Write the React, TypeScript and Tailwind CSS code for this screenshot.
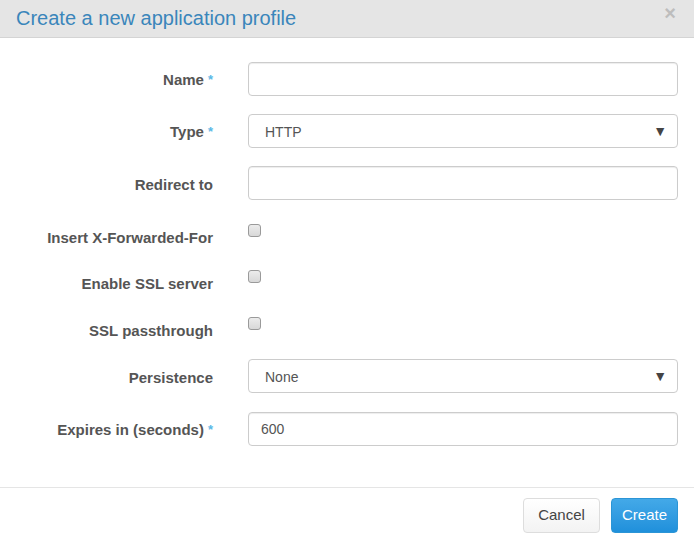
import React from 'react'

const font = { fontFamily: '"Liberation Sans", Arial, sans-serif' }

const Label = ({ text, required }: { text: string; required?: boolean }) => (
  <div className="w-[213px] shrink-0 text-right text-[15px] font-bold leading-5 text-[#555]">
    {text}
    {required && <span className="relative -top-[1px] ml-[4px] text-[13px] text-[#5bb8e6]">*</span>}
  </div>
)

const Input = ({ value }: { value?: string }) => (
  <div className="flex h-[34px] w-[430px] items-center rounded border border-[#ccc] bg-white px-3 pt-[1px] text-[14px] text-[#555] shadow-[inset_0_1px_1px_rgba(0,0,0,0.075)]">
    {value}
  </div>
)

const Select = ({ value }: { value: string }) => (
  <div className="flex h-[34px] w-[430px] items-center justify-between rounded border border-[#ccc] bg-white pl-4 pr-[10px] pt-[2px] text-[14px] text-[#555]">
    <span>{value}</span>
    <span className="-mt-[2px] text-[14px] text-[#444]">▼</span>
  </div>
)

const Checkbox = () => (
  <div className="mt-[6px] h-[13px] w-[13px] rounded-[3px] border border-[#9a9a9a] bg-gradient-to-b from-[#ececec] to-[#d8d8d8]" />
)

const FieldRow = ({ label, required, children, className }: { label: string; required?: boolean; children: React.ReactNode; className?: string }) => (
  <div className={`flex items-center gap-[35px] ${className ?? ''}`}>
    <div className="pt-[3px]">
      <Label text={label} required={required} />
    </div>
    {children}
  </div>
)

const CheckRow = ({ label, className }: { label: string; className: string }) => (
  <div className={`flex items-start gap-[35px] ${className}`}>
    <div className="pt-[10px]">
      <Label text={label} />
    </div>
    <Checkbox />
  </div>
)

export default function App() {
  return (
    <div className="h-[542px] w-[694px] overflow-hidden bg-white" style={font}>
      <div className="flex h-[38px] items-center justify-between border-b border-[#d4d4d4] bg-[#e5e5e5] pl-4 pr-[18px]">
        <h4 className="-mt-[2px] text-[20px] leading-none text-[#3a86bb]">Create a new application profile</h4>
        <span className="-mt-[12px] text-[20px] font-bold leading-none text-[#bdbdbd]">×</span>
      </div>

      <div className="pb-[41px] pt-[24px]">
        <FieldRow label="Name" required className="mb-[18px]">
          <Input />
        </FieldRow>
        <FieldRow label="Type" required className="mb-[18px]">
          <Select value="HTTP" />
        </FieldRow>
        <FieldRow label="Redirect to" className="mb-[18px]">
          <Input />
        </FieldRow>
        <CheckRow label="Insert X-Forwarded-For" className="h-[46px]" />
        <CheckRow label="Enable SSL server" className="h-[47px]" />
        <CheckRow label="SSL passthrough" className="h-[48px]" />
        <FieldRow label="Persistence" className="mb-[19px]">
          <Select value="None" />
        </FieldRow>
        <FieldRow label="Expires in (seconds)" required>
          <Input value="600" />
        </FieldRow>
      </div>

      <div className="flex justify-end gap-[11px] border-t border-[#e5e5e5] pr-4 pt-[10px]">
        <button className="h-[35px] w-[77px] rounded border border-[#ddd] bg-gradient-to-b from-white to-[#f3f3f3] text-[15px] text-[#444]">
          Cancel
        </button>
        <button className="h-[35px] w-[67px] rounded border border-[#2b95d6] bg-gradient-to-b from-[#43a9e8] to-[#1f90db] text-[15px] text-white">
          Create
        </button>
      </div>
    </div>
  )
}
